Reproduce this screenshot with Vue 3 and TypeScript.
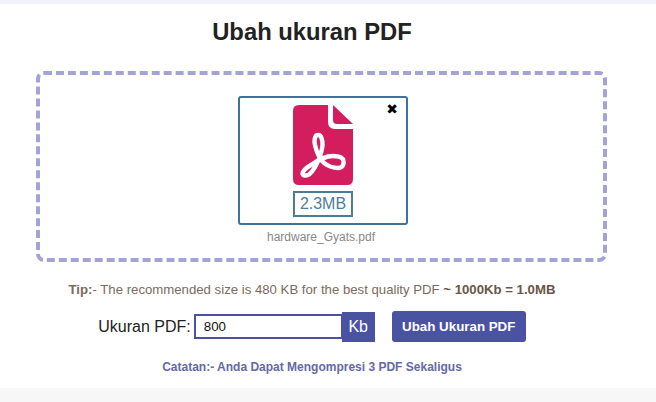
<script setup lang="ts">
const fileName = 'hardware_Gyats.pdf'
</script>

<template>
  <div class="page">
    <main class="main">
      <h1 class="title">Ubah ukuran PDF</h1>
      <section class="drop">
        <div class="card">
          <span class="close">✖</span>
          <svg class="pdf" viewBox="0 0 60 80" width="60" height="80">
            <path d="M6 0H35V17Q35 24 42 24H60V74Q60 80 54 80H6Q0 80 0 74V6Q0 0 6 0Z" fill="#d41d5c" />
            <path d="M40 0L60 19H44Q40 19 40 15Z" fill="#d41d5c" />
            <path d="M25 30C21.5 30 21 36 22 40C23.5 47 27 54 31 58C35 61 40 63 45 63C50 63 51 59 50.5 56C50 52 45 51 40 51C33 51 25 55 18 60C13 63 9.5 66 9.5 68.5C10 71 14 71 16 69.5C21 66 26 55 28 48C29.5 43 30 37 28.5 33C28 31 26.5 30 25 30Z" fill="none" stroke="#fff" stroke-width="4.4" stroke-linejoin="round" />
          </svg>
          <div class="size">2.3MB</div>
        </div>
        <div class="name">{{ fileName }}</div>
      </section>
      <p class="tip"><b>Tip:</b>- The recommended size is 480 KB for the best quality PDF <b class="dark">~ 1000Kb = 1.0MB</b></p>
      <div class="row">
        <label class="label" for="sz">Ukuran PDF:</label>
        <input id="sz" class="input" value="800" />
        <span class="unit">Kb</span>
        <button class="btn">Ubah Ukuran PDF</button>
      </div>
      <p class="note">Catatan:- Anda Dapat Mengompresi 3 PDF Sekaligus</p>
    </main>
    <div class="foot"></div>
  </div>
</template>

<style>
html, body { margin: 0; background: #fff; }
</style>

<style scoped>
.page { width: 656px; height: 402px; overflow: hidden; display: flex; flex-direction: column; font-family: "Liberation Sans", Arial, sans-serif; background: #fff; border-top: 4px solid #f2f2fb; box-sizing: border-box; }
.main { width: 624px; height: 384px; flex: none; text-align: center; }
.title { margin: 0; padding-top: 13px; font-size: 23.8px; line-height: 30px; font-weight: 700; color: #222; }
.drop { box-sizing: border-box; width: 571px; height: 191px; margin: 24px 0 0 36px; border: 4px dashed #a3a3d8; border-radius: 8px; padding-top: 21px; display: flex; flex-direction: column; align-items: center; }
.card { position: relative; box-sizing: border-box; width: 170px; height: 129px; margin-left: 3px; border: 2px solid #3f729b; border-radius: 3px; padding-top: 7px; display: flex; flex-direction: column; align-items: center; }
.close { position: absolute; top: 1px; right: 8px; font-size: 14px; line-height: 20px; color: #000; font-family: "DejaVu Sans", sans-serif; }
.pdf { display: block; }
.size { box-sizing: border-box; width: 60px; height: 26px; margin-top: 6px; border: 2px solid #4a7c96; font-size: 16px; line-height: 22px; color: #4f7d96; }
.name { margin: 5px 0 0 -1px; font-size: 12px; line-height: 14px; color: #888; }
.tip { margin: 20px 0 0; font-size: 13.2px; line-height: 16px; color: #7b6a5c; }
.tip b { color: #7b6a5c; }
.tip .dark { color: #6b5548; }
.row { display: flex; align-items: center; justify-content: center; height: 31px; margin-top: 13px; }
.label { font-size: 16px; color: #222; margin-right: 3px; }
.input { box-sizing: border-box; width: 149px; height: 25px; border: 2px solid #4a52a0; padding: 0 8px; font: 13.33px "Liberation Sans", Arial, sans-serif; color: #111; outline: none; }
.unit { box-sizing: border-box; width: 33px; height: 30px; margin-left: -1px; background: #4a53a2; color: #fff; font-size: 16px; line-height: 30px; }
.btn { box-sizing: border-box; width: 134px; height: 31px; margin-left: 17px; border: 0; border-radius: 3px; background: #4a53a2; color: #fff; font: 700 13.33px "Liberation Sans", Arial, sans-serif; }
.note { margin: 18px 0 0; font-size: 12px; line-height: 14px; font-weight: 700; color: #6468a8; }
.foot { flex: 1; background: #f7f7f7; }
</style>
